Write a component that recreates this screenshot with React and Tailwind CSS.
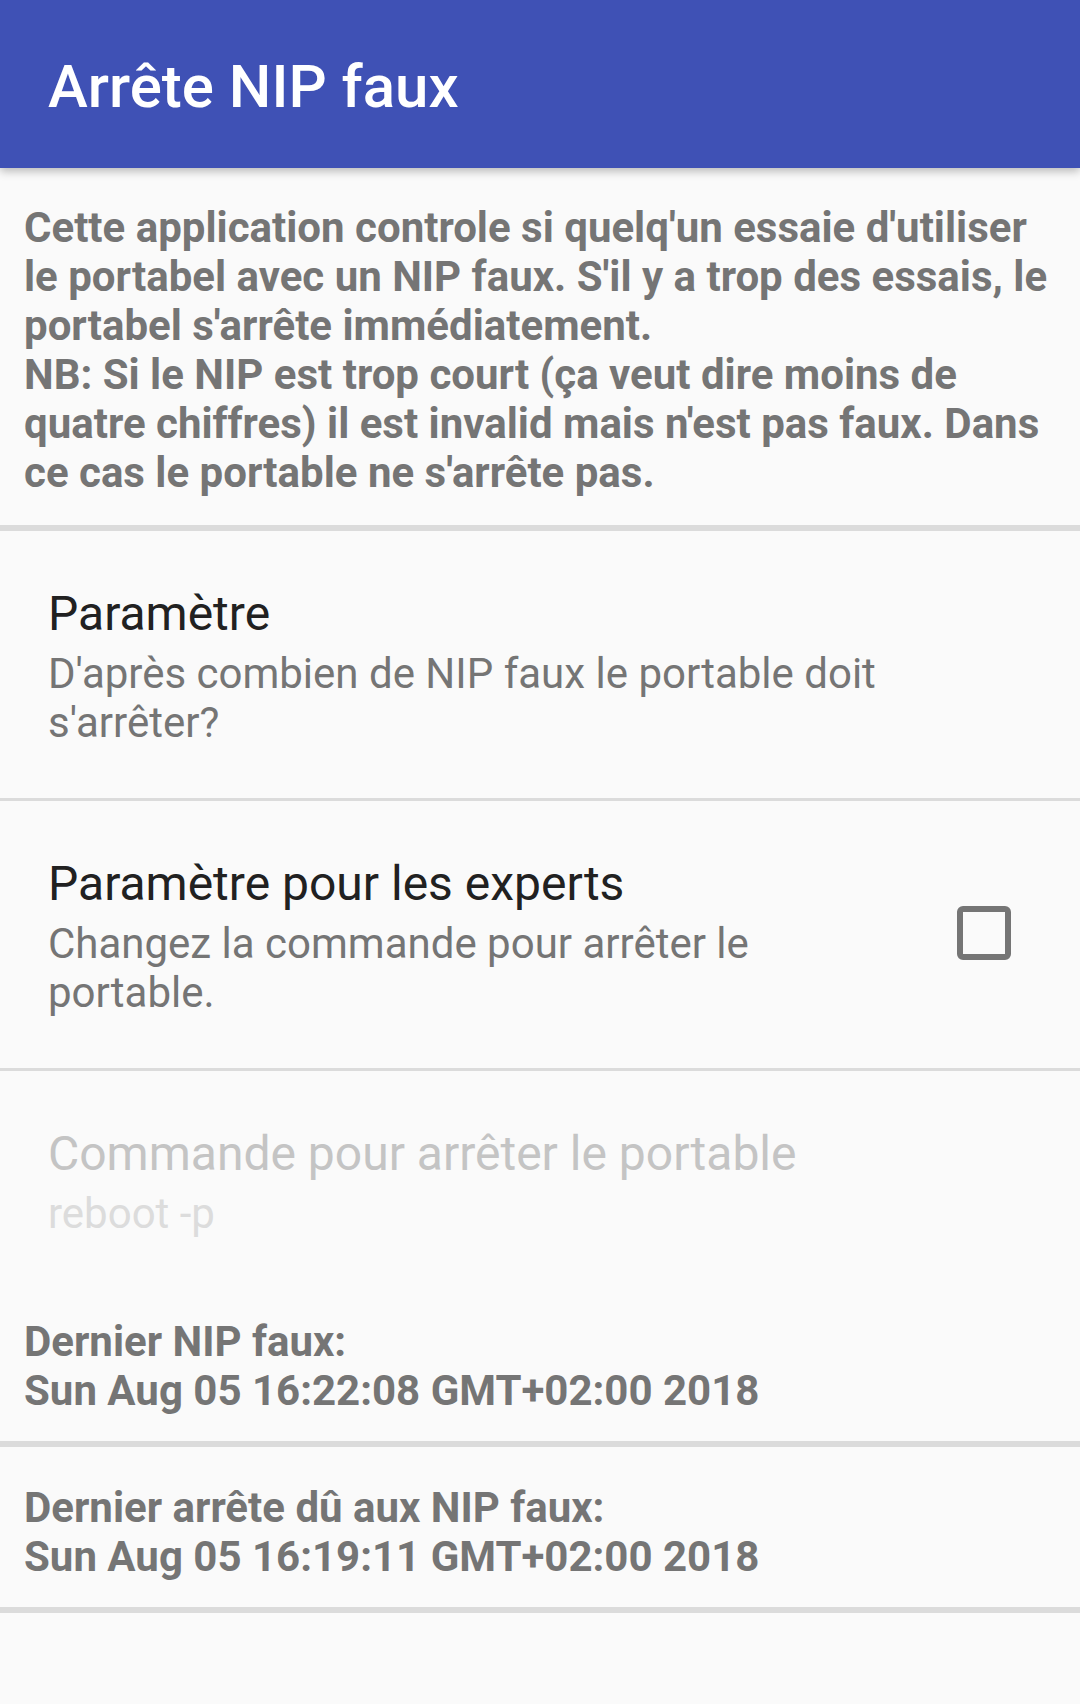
import React from "react";

function Divider({ thick }) {
  return <div className={thick ? "h-[6px] bg-[#dbdbdb]" : "h-[3px] bg-[#dbdbdb]"} />;
}

function Pref({ title, summary, disabled, checkbox, pb = "pb-[51px]" }) {
  return (
    <div className={`flex items-center pl-[48px] pr-[48px] pt-[55px] ${pb}`}>
      <div className={checkbox ? "w-[840px]" : "flex-1"}>
        <div
          className={`text-[48px] leading-[56px] ${disabled ? "text-[#c4c4c4]" : "text-[#212121]"}`}
        >
          {title}
        </div>
        <div
          className={`mt-[7px] text-[42px] leading-[49px] ${disabled ? "text-[#dcdcdc]" : "text-[#757575]"}`}
        >
          {summary}
        </div>
      </div>
      {checkbox && (
        <div className="ml-auto mr-[21px] mb-[7px] w-[54px] h-[54px] rounded-[6px] border-[6px] border-[#757575]" />
      )}
    </div>
  );
}

export default function App() {
  return (
    <div
      className="w-[1080px] h-[1704px] bg-[#fafafa] overflow-hidden"
      style={{ fontFamily: "Roboto, 'Noto Sans', sans-serif" }}
    >
      <div className="relative z-10 h-[168px] bg-[#3f51b5] pl-[48px] pt-[52px] shadow-[0_3px_9px_rgba(0,0,0,0.28)]">
        <div className="text-white text-[60px] leading-[70px] font-medium">Arrête NIP faux</div>
      </div>

      <div className="px-[24px] pt-[35px] pb-[28px] text-[42px] leading-[49px] font-bold text-[#757575]">
        Cette application controle si quelq'un essaie d'utiliser le portabel avec un NIP faux. S'il y a trop
        des essais, le portabel s'arrête immédiatement.
        <br />
        NB: Si le NIP est trop court (ça veut dire moins de quatre chiffres) il est invalid mais n'est pas
        faux. Dans ce cas le portable ne s'arrête pas.
      </div>
      <Divider thick />

      <Pref title="Paramètre" summary="D'après combien de NIP faux le portable doit s'arrêter?" />
      <Divider />
      <Pref
        title="Paramètre pour les experts"
        summary="Changez la commande pour arrêter le portable."
        checkbox
      />
      <Divider />
      <Pref title="Commande pour arrêter le portable" summary="reboot -p" disabled pb="pb-[43px]" />

      <div className="px-[24px] pt-[36px] pb-[26px] text-[42px] leading-[49px] font-bold text-[#757575]">
        <div>Dernier NIP faux:</div>
        <div>Sun Aug 05 16:22:08 GMT+02:00 2018</div>
      </div>
      <Divider thick />
      <div className="px-[24px] pt-[36px] pb-[26px] text-[42px] leading-[49px] font-bold text-[#757575]">
        <div>Dernier arrête dû aux NIP faux:</div>
        <div>Sun Aug 05 16:19:11 GMT+02:00 2018</div>
      </div>
      <Divider thick />
    </div>
  );
}
